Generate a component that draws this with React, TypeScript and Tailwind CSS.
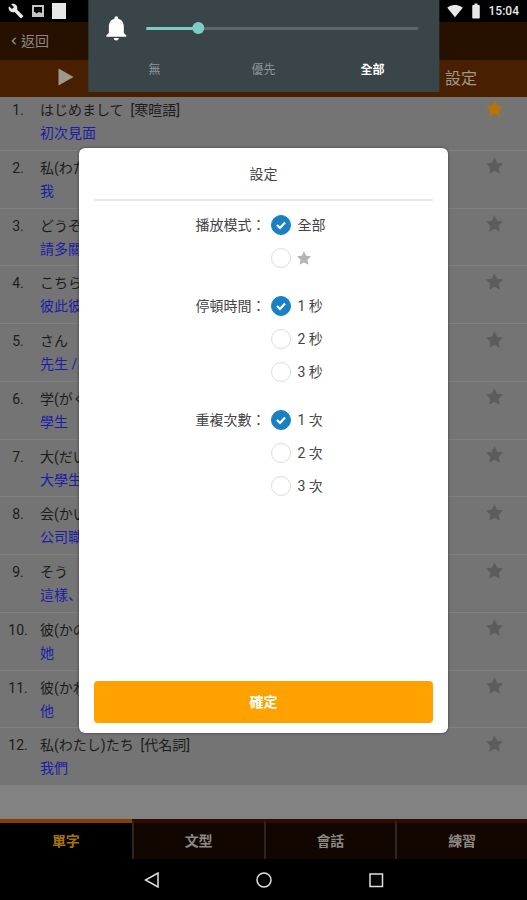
import { useState } from 'react';
import { MdBuild, MdNotifications, MdSignalWifi4Bar, MdBatteryFull } from 'react-icons/md';

interface Word {
  jp: string;
  zh: string;
  starred?: boolean;
}

interface Option {
  value: string;
  label: string;
}

const WORDS: Word[] = [
  { jp: 'はじめまして\u00a0 [寒暄語]', zh: '初次見面', starred: true },
  { jp: '私(わたし)', zh: '我' },
  { jp: 'どうぞよろしく', zh: '請多關照' },
  { jp: 'こちらこそ', zh: '彼此彼此' },
  { jp: 'さん', zh: '先生 / 小姐' },
  { jp: '学(がく)生(せい)', zh: '學生' },
  { jp: '大(だい)学(がく)生(せい)', zh: '大學生' },
  { jp: '会(かい)社(しゃ)員(いん)', zh: '公司職員' },
  { jp: 'そう', zh: '這樣、那樣' },
  { jp: '彼(かの)女(じょ)', zh: '她' },
  { jp: '彼(かれ)', zh: '他' },
  { jp: '私(わたし)たち\u00a0 [代名詞]', zh: '我們' },
];

const TABS = ['單字', '文型', '會話', '練習'];
const ZEN_MODES = ['無', '優先', '全部'];

const MODES: Option[] = [
  { value: 'all', label: '全部' },
  { value: 'star', label: '★' },
];
const PAUSES: Option[] = [
  { value: '1', label: '1 秒' },
  { value: '2', label: '2 秒' },
  { value: '3', label: '3 秒' },
];
const REPEATS: Option[] = [
  { value: '1', label: '1 次' },
  { value: '2', label: '2 次' },
  { value: '3', label: '3 次' },
];

function Star({ className }: { className: string }) {
  return (
    <svg viewBox="0 0 24 24" className={className} fill="currentColor" aria-hidden="true">
      <path d="M12 0.500l3.700 7.700 8.300 1-6.100 5.800 1.600 8.500L12 19.400l-7.500 4.100 1.600-8.500L0 9.200l8.300-1z" />
    </svg>
  );
}

function StatusBar() {
  return (
    <div className="flex h-[22px] shrink-0 items-center justify-between bg-black px-2 text-[#e8e8e8]">
      <div className="flex items-center">
        <MdBuild className="size-4" />
        <svg viewBox="0 0 12 12" className="ml-2 size-3">
          <rect x="1" y="1" width="10" height="10" fill="none" stroke="#c4c4c4" strokeWidth="2" />
          <path d="M2 7h1l1.500 1.500L7 7l3 1v2H2z" fill="#c4c4c4" />
        </svg>
        <span className="ml-2 h-4 w-[14px] bg-[#e8e8e8]" />
      </div>
      <div className="flex items-center">
        <MdSignalWifi4Bar className="size-4" />
        <MdBatteryFull className="ml-1 size-[18px]" />
        <span className="ml-1 text-[12px] font-medium">15:04</span>
      </div>
    </div>
  );
}

function VolumePanel() {
  const [volume, setVolume] = useState(18);
  const [zen, setZen] = useState('全部');

  return (
    <div className="absolute top-0 left-1/2 z-20 h-[92px] w-2/3 -translate-x-1/2 bg-[#3a454a]">
      <div className="flex h-14 items-center gap-[15px] pr-[21px] pl-[13px]">
        <MdNotifications className="size-[30px] shrink-0 text-white" />
        <input
          type="range"
          aria-label="音量"
          min={0}
          max={100}
          value={volume}
          onChange={(e) => setVolume(Number(e.target.value))}
          style={{ backgroundImage: `linear-gradient(to right, #80cbc4 ${volume}%, #5d676b ${volume}%)` }}
          className="h-[3px] min-w-0 flex-1 appearance-none [&::-webkit-slider-thumb]:size-3 [&::-webkit-slider-thumb]:appearance-none [&::-webkit-slider-thumb]:rounded-full [&::-webkit-slider-thumb]:bg-[#80cbc4]"
        />
      </div>
      <div className="grid grid-cols-3 px-3">
        {ZEN_MODES.map((mode) => (
          <button
            key={mode}
            onClick={() => setZen(mode)}
            className={`h-7 text-[12px] ${zen === mode ? 'font-bold text-white' : 'text-[#8d9699]'}`}
          >
            {mode}
          </button>
        ))}
      </div>
    </div>
  );
}

function WordRow({ word, index }: { word: Word; index: number }) {
  return (
    <li className="flex min-h-[54px] flex-1 border-b border-[#808080] pt-1.5 last:border-b-0">
      <span className="w-9 shrink-0 text-center text-[14px] leading-[23px] text-[#1c1c1c]">{index}.</span>
      <div className="ml-1 flex-1 text-[14px] leading-[23px]">
        <p lang="ja" className="font-['Roboto','Noto_Sans_CJK_JP',sans-serif] text-[#1c1c1c]">{word.jp}</p>
        <p lang="zh" className="font-['Roboto','Noto_Sans_CJK_SC',sans-serif] text-[#1c1ca8]">{word.zh}</p>
      </div>
      <button aria-label="收藏" className="mr-6 flex h-[18px] items-center">
        <Star className={`size-[17px] ${word.starred ? 'text-[#b87400]' : 'text-[#5c5c5c]'}`} />
      </button>
    </li>
  );
}

interface OptionGroupProps {
  title: string;
  name: string;
  options: Option[];
  initial: string;
}

function OptionGroup({ title, name, options, initial }: OptionGroupProps) {
  const [selected, setSelected] = useState(initial);

  return (
    <fieldset className="flex pl-1" aria-label={title}>
      <span className="w-1/2 text-right text-[14px] leading-[32px]">{title}：</span>
      <div className="pl-[6px]">
        {options.map((option) => (
          <label key={option.value} className="flex h-[33px] items-center gap-[6px] text-[14px] leading-[32px]">
            <span className="grid place-items-center">
              <input
                type="radio"
                name={name}
                aria-label={option.label}
                checked={selected === option.value}
                onChange={() => setSelected(option.value)}
                className="col-start-1 row-start-1 size-5 appearance-none rounded-full border border-[#dcdcdc] bg-white checked:border-[#1a80c4] checked:bg-[#1a80c4]"
              />
              {selected === option.value && (
                <svg viewBox="0 0 20 20" className="pointer-events-none col-start-1 row-start-1 size-5">
                  <path d="M6 10l3 3 5-5.500" fill="none" stroke="white" strokeWidth="2.200" />
                </svg>
              )}
            </span>
            {option.value === 'star' ? <Star className="size-[14px] text-[#b4b4b4]" /> : option.label}
          </label>
        ))}
      </div>
    </fieldset>
  );
}

function SettingsDialog() {
  return (
    <div className="absolute inset-0 z-10 flex items-center justify-center">
      <div
        role="dialog"
        aria-label="設定"
        className="flex h-[70%] w-[70%] flex-col rounded-md bg-white px-[15px] pb-[10px] text-[#444] shadow-[0_0_3px_rgba(0,0,0,0.5)]"
      >
        <h2 className="h-[53px] shrink-0 border-b-2 border-[#e8e8e8] text-center text-[14px] leading-[52px]">設定</h2>
        <div className="flex flex-1 flex-col gap-[15px] pt-2">
          <OptionGroup title="播放模式" name="mode" options={MODES} initial="all" />
          <OptionGroup title="停頓時間" name="pause" options={PAUSES} initial="1" />
          <OptionGroup title="重複次數" name="repeat" options={REPEATS} initial="1" />
        </div>
        <button className="h-[42px] shrink-0 rounded bg-[#ffa200] text-[14px] font-bold text-white">確定</button>
      </div>
    </div>
  );
}

function TabBar() {
  const [active, setActive] = useState('單字');

  return (
    <nav className="grid h-10 shrink-0 grid-cols-4 bg-[#120600]">
      {TABS.map((tab) => (
        <button
          key={tab}
          onClick={() => setActive(tab)}
          className={`border-t-4 text-[14px] font-bold ${
            active === tab
              ? 'border-t-[#8a3e06] bg-black text-[#a87400]'
              : 'border-t-[#300a06] border-l-2 border-l-[#2c2622] text-[#8c8884]'
          }`}
        >
          {tab}
        </button>
      ))}
    </nav>
  );
}

function NavBar() {
  return (
    <div className="flex h-[41px] shrink-0 items-center justify-center gap-24 bg-black text-[#e0e0e0]">
      <button aria-label="Back">
        <svg viewBox="0 0 16 16" className="size-4" fill="none" stroke="currentColor" strokeWidth="1.500">
          <path d="M14 1v14L1.500 8z" />
        </svg>
      </button>
      <button aria-label="Home">
        <svg viewBox="0 0 16 16" className="size-4" fill="none" stroke="currentColor" strokeWidth="1.500">
          <circle cx="8" cy="8" r="7" />
        </svg>
      </button>
      <button aria-label="Recent">
        <svg viewBox="0 0 16 16" className="size-4" fill="none" stroke="currentColor" strokeWidth="1.500">
          <rect x="2" y="2" width="12.500" height="12.500" />
        </svg>
      </button>
    </div>
  );
}

export default function App() {
  return (
    <div lang="zh-TW" className="relative flex min-h-screen flex-col bg-[#828282] font-['Roboto','Noto_Sans_CJK_TC',sans-serif]">
      <StatusBar />
      <VolumePanel />
      <main className="relative flex flex-1 flex-col">
        <header className="flex h-[38px] shrink-0 items-center bg-[#261100] px-[11px]">
          <button className="flex items-center gap-1 text-[14px] text-[#908880]">
            <svg viewBox="0 0 6 10" className="h-2 w-[6px]" fill="none" stroke="currentColor" strokeWidth="1.800">
              <path d="M5 1L1 5l4 4" />
            </svg>
            返回
          </button>
        </header>
        <div className="grid h-[37px] shrink-0 grid-cols-4 items-center justify-items-center bg-[#482000] text-[#a09890]">
          <button aria-label="播放" className="pb-1">
            <svg viewBox="0 0 16 18" className="h-[18px] w-4" fill="currentColor">
              <path d="M0.500 0.500l15 8.500-15 8.500z" />
            </svg>
          </button>
          <button className="col-start-4 text-[16px]">設定</button>
        </div>
        <div className="mb-[34px] flex flex-1 flex-col overflow-hidden bg-[#747474]">
          <ul className="-mt-1 flex flex-1 flex-col">
            {WORDS.map((word, i) => (
              <WordRow key={word.jp} word={word} index={i + 1} />
            ))}
          </ul>
        </div>
        <TabBar />
        <SettingsDialog />
      </main>
      <NavBar />
    </div>
  );
}
